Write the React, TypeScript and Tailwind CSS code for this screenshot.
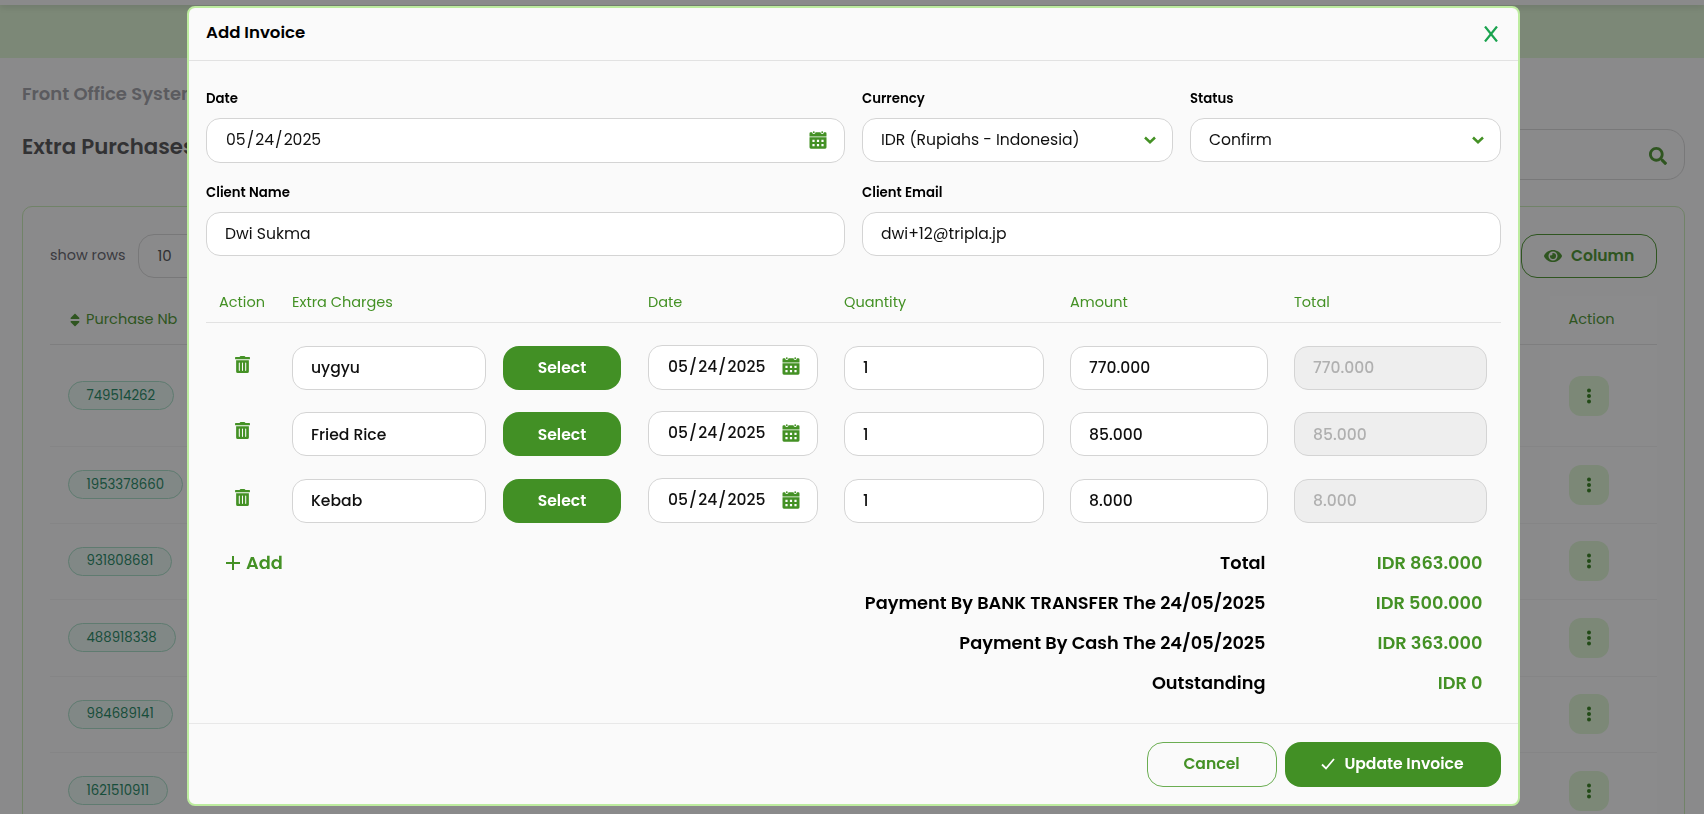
import type { ReactNode } from "react";
import clsx from "clsx";
import { FaEye, FaSearch, FaSort, FaTrashAlt } from "react-icons/fa";

const purchases = [
  { id: "749514262", tall: true },
  { id: "1953378660" },
  { id: "931808681" },
  { id: "488918338" },
  { id: "984689141" },
  { id: "1621510911" },
];

const charges = [
  { name: "uygyu", date: "05/24/2025", quantity: "1", amount: "770.000" },
  { name: "Fried Rice", date: "05/24/2025", quantity: "1", amount: "85.000" },
  { name: "Kebab", date: "05/24/2025", quantity: "1", amount: "8.000" },
];

const totals = [
  { label: "Total", value: "IDR 863.000" },
  { label: "Payment By BANK TRANSFER The 24/05/2025", value: "IDR 500.000" },
  { label: "Payment By Cash The 24/05/2025", value: "IDR 363.000" },
  { label: "Outstanding", value: "IDR 0" },
];

const CalendarIcon = () => (
  <svg viewBox="0 0 18 18" className="size-[18px] shrink-0 text-[#449125]" fill="currentColor">
    <path d="M1.6 1.3h1.5a1.700 1.700 0 0 0 3.400 0h5a1.700 1.700 0 0 0 3.400 0h1.500q1.100 0 1.100 1.100v3.100H.5V2.400q0-1.100 1.100-1.100z" />
    <circle cx="4.800" cy="1.200" r="0.900" />
    <circle cx="13.200" cy="1.200" r="0.900" />
    <path
      fillRule="evenodd"
      d="M.5 6.300h17v10q0 1.400-1.400 1.400H1.900Q.5 17.700.5 16.300zM3.400 8.800v2.200h2.200V8.800zm4.500 0v2.200h2.200V8.800zm4.500 0v2.200h2.200V8.800zM3.400 13v2.200h2.200V13zm4.500 0v2.200h2.200V13zm4.500 0v2.200h2.200V13z"
    />
  </svg>
);

const ChevronIcon = () => (
  <svg viewBox="0 0 12 8" className="h-2 w-3 shrink-0" fill="none" stroke="#449125" strokeWidth="2.500">
    <path d="M1 1.500l5 4.700 5-4.700" />
  </svg>
);

const DotsIcon = () => (
  <svg viewBox="0 0 4 16" className="h-4 w-1" fill="#2a7a12">
    <circle cx="2" cy="2.400" r="2" />
    <circle cx="2" cy="8" r="2" />
    <circle cx="2" cy="13.600" r="2" />
  </svg>
);

type BoxProps = {
  children: ReactNode;
  className?: string;
};

const Box = ({ children, className }: BoxProps) => (
  <div
    className={clsx(
      "flex h-11 items-center rounded-[14px] border border-[#d4d4d4] pl-[18px]",
      className
    )}
  >
    {children}
  </div>
);

const DateBox = ({ value }: { value: string }) => {
  const [month, day, year] = value.split("/");

  return (
    <Box className="h-[45px] justify-between bg-white pr-[17px] pb-0.5">
      <span className="pl-px">
        {month}
        <span className="mx-[1.100px]">/</span>
        {day}
        <span className="mx-[1.100px]">/</span>
        {year}
      </span>
      <CalendarIcon />
    </Box>
  );
};

type FieldProps = {
  label: string;
  className?: string;
  children: ReactNode;
};

const Field = ({ label, className, children }: FieldProps) => (
  <div className={className}>
    <div className="mb-[9px] text-[13.300px] leading-5 font-semibold text-black">{label}</div>
    {children}
  </div>
);

const Page = () => (
  <div className="h-full">
    <div className="relative z-10 h-[5px] bg-[#fafafa] shadow-[0_2px_6px_rgba(0,0,0,0.14)]" />
    <div className="h-[53px] bg-[#def6d2]" />
    <div className="px-[22px] pr-[19px]">
      <div className="mt-6 text-[18px] leading-6 font-semibold text-[#9c9ca3]">Front Office System</div>
      <div className="mt-[23px] flex h-[51px] items-center justify-between">
        <div className="pb-[15px] text-[21.300px] font-semibold text-[#4a4a4c]">Extra Purchases</div>
        <div className="flex h-[51px] w-[420px] items-center justify-end rounded-[18px] border border-[#d6d6d6] pr-[17px]">
          <FaSearch className="mt-0.5 size-[18px] text-[#449125]" />
        </div>
      </div>
      <div className="mt-[26px] h-[700px] rounded-[10px] border border-[#c8ecb4] px-[27px] pt-[27px]">
        <div className="flex h-11 items-center justify-between">
          <div className="flex items-center gap-[13px]">
            <span className="text-[14.400px] text-[#5c5c66]">show rows</span>
            <div className="flex h-11 w-24 items-center rounded-2xl border border-[#d6d6d6] pl-[18px] text-[15px] text-[#48484a]">
              10
            </div>
          </div>
          <div className="flex h-11 w-[136px] items-center gap-[9px] rounded-2xl border border-[#449125] pl-[22px] text-[15.600px] font-semibold text-[#449125]">
            <FaEye className="size-[18px]" />
            <span>Column</span>
          </div>
        </div>
        <div className="mt-[18px] flex h-[49px] items-stretch justify-between border-b border-[#e2e2e2] text-[14.500px] text-[#449125]">
          <div className="flex items-center gap-[6px] pl-5">
            <FaSort className="h-4 w-2.5" />
            Purchase Nb
          </div>
          <div className="flex w-[107px] items-center bg-[#fdfdfd] pl-[18.500px]">Action</div>
        </div>
        {purchases.map((purchase) => (
          <div
            key={purchase.id}
            className={clsx(
              "flex items-stretch justify-between border-b border-[#f0f0f0]",
              purchase.tall ? "h-[102px]" : "h-[76.500px]"
            )}
          >
            <div className="flex items-center pl-[17.500px]">
              <span className="flex h-[29px] items-center rounded-full border border-[#a4dcc4] bg-[#e8f6f0] px-[18px] text-[13.300px] text-[#15825a]">
                {purchase.id}
              </span>
            </div>
            <div className="flex w-[107px] items-center bg-[#fdfdfd] pl-[18.500px]">
              <div className="flex size-10 items-center justify-center rounded-xl bg-[#def6d2]">
                <DotsIcon />
              </div>
            </div>
          </div>
        ))}
      </div>
    </div>
  </div>
);

const ChargeTable = () => (
  <div className="mt-[31px]">
    <div className="grid h-9 grid-cols-[73px_356px_196px_226px_224px_219px] border-b border-[#e2e2e2] text-[14.500px] leading-[30px] text-[#449125] *:pl-[13px]">
      <div>Action</div>
      <div>Extra Charges</div>
      <div>Date</div>
      <div>Quantity</div>
      <div>Amount</div>
      <div>Total</div>
    </div>
    <div className="mt-[11.500px] font-medium">
      {charges.map((charge) => (
        <div
          key={charge.name}
          className="grid h-[66.670px] grid-cols-[73px_356px_196px_226px_224px_219px] items-center *:px-[13px]"
        >
          <div className="flex justify-center pb-[7px]">
            <FaTrashAlt className="h-[17px] w-[15px] text-[#449125]" />
          </div>
          <div className="flex gap-[17px]">
            <Box className="w-[194px] bg-white">{charge.name}</Box>
            <button className="h-11 w-[118px] rounded-2xl bg-[#429025] font-semibold text-white">Select</button>
          </div>
          <div className="pb-px">
            <DateBox value={charge.date} />
          </div>
          <div>
            <Box className="bg-white">{charge.quantity}</Box>
          </div>
          <div>
            <Box className="bg-white">{charge.amount}</Box>
          </div>
          <div>
            <Box className="bg-[#eeeeee] text-[#b0b0b0]">{charge.amount}</Box>
          </div>
        </div>
      ))}
    </div>
  </div>
);

const InvoiceModal = () => (
  <div className="flex h-[800px] w-[1333px] flex-col rounded-lg border-2 border-[#bdec9f] bg-[#fafafa] text-[15.600px] text-[#101010]">
    <div className="flex h-[53px] items-center justify-between border-b border-[#e2e2e2] pr-5 pl-[17px]">
      <h2 className="pb-0.5 text-[16.600px] font-semibold text-black">Add Invoice</h2>
      <svg viewBox="0 0 14 16" className="h-4 w-3.5" fill="none" stroke="#1ba34f" strokeWidth="2.200">
        <path d="M1 .5l12 15M13 .5L1 15.500" />
      </svg>
    </div>

    <div className="flex-1 pt-7 pr-[17.500px] pl-[17px]">
      <div className="grid grid-cols-4 gap-x-[17.500px] gap-y-[20px]">
        <Field label="Date" className="col-span-2">
          <DateBox value="05/24/2025" />
        </Field>
        <Field label="Currency">
          <Box className="justify-between bg-white pr-4">
            IDR (Rupiahs - Indonesia)
            <ChevronIcon />
          </Box>
        </Field>
        <Field label="Status">
          <Box className="justify-between bg-white pr-4">
            Confirm
            <ChevronIcon />
          </Box>
        </Field>
        <Field label="Client Name" className="col-span-2">
          <Box className="bg-white">Dwi Sukma</Box>
        </Field>
        <Field label="Client Email" className="col-span-2">
          <Box className="bg-white">dwi+12@tripla.jp</Box>
        </Field>
      </div>

      <ChargeTable />

      <div className="mt-[8.500px] flex justify-between pl-5 text-[17.750px] leading-10 font-semibold">
        <button className="flex h-10 items-center gap-[6px] text-[#449125]">
          <svg viewBox="0 0 14 14" className="size-3.5" stroke="currentColor" strokeWidth="2">
            <path d="M7 0v14M0 7h14" />
          </svg>
          Add
        </button>
        <div className="pr-[18px]">
          {totals.map((total) => (
            <div key={total.label} className="flex justify-end text-right">
              <div className="text-black">{total.label}</div>
              <div className="w-[217px] text-[#449125]">{total.value}</div>
            </div>
          ))}
        </div>
      </div>
    </div>

    <div className="flex h-[81px] items-center justify-end gap-2 border-t border-[#e8e8e8] pr-[17.500px] pl-[17px] font-semibold">
      <button className="h-[45px] w-[130px] rounded-2xl border border-[#6bad52] pb-px text-[#449125]">Cancel</button>
      <button className="flex h-[45px] w-[216px] items-center justify-center gap-[9px] rounded-2xl bg-[#429025] pb-px text-white">
        <svg viewBox="0 0 14 12" className="h-3 w-3.5" fill="none" stroke="currentColor" strokeWidth="1.800">
          <path d="M1 6.500l4 4L13 1" />
        </svg>
        Update Invoice
      </button>
    </div>
  </div>
);

export default function App() {
  return (
    <div className="h-[814px] overflow-hidden bg-[#fafafa] font-['Poppins','Inter',sans-serif]">
      <Page />
      <div className="fixed inset-0 z-20 flex items-start bg-[#1a1a1c]/50 pt-1.5 pl-[187px]">
        <InvoiceModal />
      </div>
    </div>
  );
}
